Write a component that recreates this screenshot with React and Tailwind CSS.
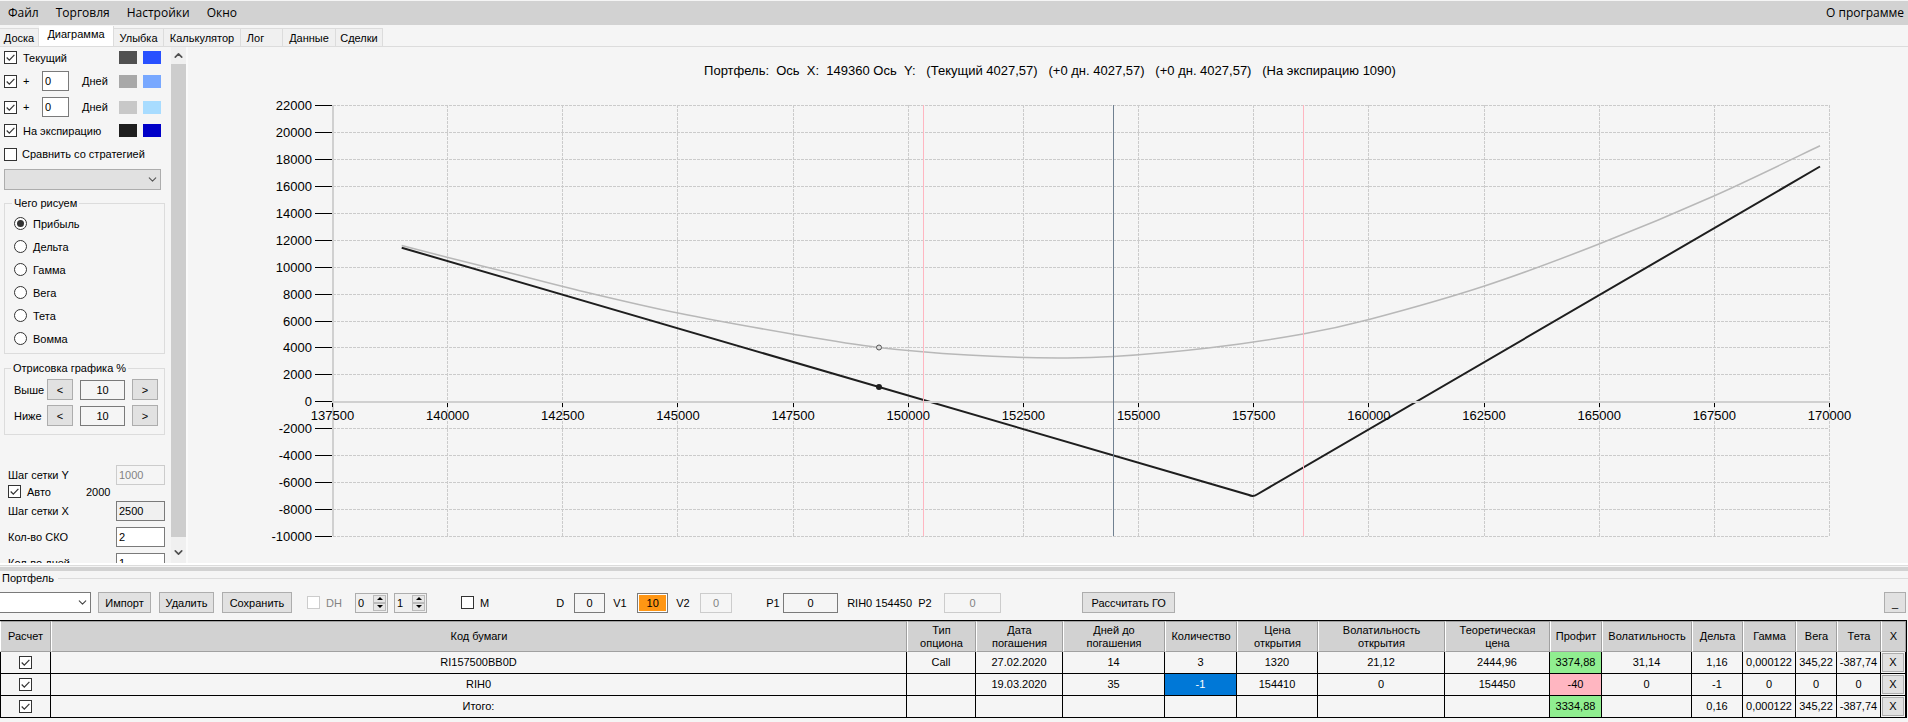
import { useState } from "react";
import { ChevronDown, ChevronUp } from "lucide-react";

const tabs = [
    { name: "Доска", width: "w-[39px]" },
    { name: "Диаграмма", width: "w-[75px]" },
    { name: "Улыбка", width: "w-[50px]" },
    { name: "Калькулятор", width: "w-[77px]" },
    { name: "Лог", width: "w-[42px]" },
    { name: "Данные", width: "w-[53px]" },
    { name: "Сделки", width: "w-[47px]" },
];

const modes = ["Прибыль", "Дельта", "Гамма", "Вега", "Тета", "Вомма"];

const columns = [
    { title: "Расчет", width: "w-[51px]" },
    { title: "Код бумаги", width: "" },
    { title: "Тип опциона", width: "w-[69px]", pad: "px-2" },
    { title: "Дата погашения", width: "w-[87px]", pad: "px-3" },
    { title: "Дней до погашения", width: "w-[102px]", pad: "px-5" },
    { title: "Количество", width: "w-[72px]" },
    { title: "Цена открытия", width: "w-[81px]", pad: "px-3" },
    { title: "Волатильность открытия", width: "w-[127px]" },
    { title: "Теоретическая цена", width: "w-[105px]" },
    { title: "Профит", width: "w-[52px]" },
    { title: "Волатильность", width: "w-[90px]" },
    { title: "Дельта", width: "w-[51px]" },
    { title: "Гамма", width: "w-[53px]" },
    { title: "Вега", width: "w-[41px]" },
    { title: "Тета", width: "w-[44px]" },
    { title: "X", width: "w-[25px]" },
];

const positions = [
    ["RI157500BB0D", "Call", "27.02.2020", "14", "3", "1320", "21,12", "2444,96", "3374,88", "31,14", "1,16", "0,000122", "345,22", "-387,74"],
    ["RIH0", "", "19.03.2020", "35", "-1", "154410", "0", "154450", "-40", "0", "-1", "0", "0", "0"],
    ["Итого:", "", "", "", "", "", "", "", "3334,88", "", "0,16", "0,000122", "345,22", "-387,74"],
];

const cellColor = (row, col) => {
    if (row === 1 && col === 4) return "bg-[#0078d7] text-white";
    if (col === 8) return row === 1 ? "bg-[#ffb6c1]" : "bg-[#90ee90]";
    return "";
};

const Check = ({ id, label, checked = false, disabled = false }) => {
    const [on, setOn] = useState(checked);
    return (
        <span className="relative inline-block size-[13px] shrink-0 align-middle">
            <input
                id={id}
                type="checkbox"
                aria-label={label}
                checked={on}
                disabled={disabled}
                onChange={() => setOn(!on)}
                className="block size-[13px] appearance-none border border-[#333] bg-white disabled:border-[#ccc]"
            />
            {on && (
                <svg className="pointer-events-none absolute inset-0" viewBox="0 0 13 13" fill="none">
                    <path d="M2.7 6.5 5.3 9.1 10.4 3.9" stroke="#333" strokeWidth="1.2" />
                </svg>
            )}
        </span>
    );
};

const Swatches = ({ first, second }) => (
    <span className="ml-auto flex gap-[6px] pr-[10px]">
        <span className={`h-[13px] w-[18px] ${first}`} />
        <span className={`h-[13px] w-[18px] ${second}`} />
    </span>
);

const Button = ({ height = "h-[21px]", className = "", ...props }) => (
    <button
        type="button"
        className={`flex items-center justify-center border border-[#adadad] bg-[#e1e1e1] hover:bg-[#e5f1fb] ${height} ${className}`}
        {...props}
    />
);

const DaysRow = ({ id, first, second }) => (
    <div className="flex h-[26px] items-center pl-1">
        <Check id={id} checked />
        <label htmlFor={id} className="ml-[6px] w-[19px]">+</label>
        <input aria-label="Дней" defaultValue="0" className="h-5 w-[27px] border border-[#7a7a7a] bg-white px-[2px]" />
        <span className="ml-[13px]">Дней</span>
        <Swatches first={first} second={second} />
    </div>
);

const PercentRow = ({ name }) => (
    <div className="flex items-center">
        <span className="w-[33px]">{name}</span>
        <Button className="w-[26px]" aria-label={`${name} меньше`}>&lt;</Button>
        <input aria-label={name} defaultValue="10" className="ml-[7px] h-5 w-[45px] border border-[#7a7a7a] text-center" />
        <Button className="ml-[7px] w-[26px]" aria-label={`${name} больше`}>&gt;</Button>
    </div>
);

const Field = ({ id, label, className = "", ...props }) => (
    <div className="flex items-center justify-between">
        <label htmlFor={id}>{label}</label>
        <input id={id} className={`h-5 w-[49px] border px-[2px] ${className}`} {...props} />
    </div>
);

const Settings = () => {
    const [mode, setMode] = useState("Прибыль");

    return (
        <aside className="flex w-[188px] shrink-0 border-r-2 border-[#fafafa]">
            <div className="w-[171px] overflow-hidden">
                <div className="flex h-[21px] items-center pl-1">
                    <Check id="current" checked />
                    <label htmlFor="current" className="ml-[6px]">Текущий</label>
                    <Swatches first="bg-[#505050]" second="bg-[#2850ff]" />
                </div>
                <DaysRow id="plus1" first="bg-[#a8a8a8]" second="bg-[#78a8ff]" />
                <DaysRow id="plus2" first="bg-[#c8c8c8]" second="bg-[#a8dcff]" />
                <div className="flex h-[21px] items-center pl-1">
                    <Check id="expiration" checked />
                    <label htmlFor="expiration" className="ml-[6px]">На экспирацию</label>
                    <Swatches first="bg-[#1e1e1e]" second="bg-[#0000c8]" />
                </div>
                <div className="flex h-[26px] items-center pl-1">
                    <Check id="compare" />
                    <label htmlFor="compare" className="ml-[5px]">Сравнить со стратегией</label>
                </div>
                <div className="relative ml-1 mt-[2px] w-[157px]">
                    <select aria-label="Стратегия" className="block h-[21px] w-full appearance-none border border-[#adadad] bg-[#e1e1e1]" />
                    <ChevronDown className="pointer-events-none absolute right-[2px] top-1 size-[13px] text-[#555]" strokeWidth={2} />
                </div>

                <fieldset className="ml-1 mt-[6px] w-[161px] border border-[#dcdcdc] pb-[3px] pl-[9px] pt-[2px]">
                    <legend className="-ml-[2px] h-[14px] px-[2px] leading-[14px]">Чего рисуем</legend>
                    {modes.map((item) => (
                        <label key={item} className="flex h-[23px] items-center gap-[6px]">
                            <input
                                type="radio"
                                name="mode"
                                checked={mode === item}
                                onChange={() => setMode(item)}
                                className="grid size-[13px] appearance-none place-items-center rounded-full border border-[#333] bg-white checked:before:size-[7px] checked:before:rounded-full checked:before:bg-[#333] checked:before:content-['']"
                            />
                            {item}
                        </label>
                    ))}
                </fieldset>

                <fieldset className="ml-1 mt-[7px] flex w-[161px] flex-col gap-[5px] border border-[#dcdcdc] pb-2 pl-[9px] pt-1">
                    <legend className="-ml-[3px] h-[14px] px-[2px] leading-[14px]">Отрисовка графика %</legend>
                    <PercentRow name="Выше" />
                    <PercentRow name="Ниже" />
                </fieldset>

                <div className="ml-2 mt-[30px] w-[157px]">
                    <Field id="step-y" label="Шаг сетки Y" defaultValue="1000" disabled className="border-[#ccc] text-[#838383]" />
                    <div className="flex h-[13px] items-center">
                        <Check id="auto" checked />
                        <label htmlFor="auto" className="ml-[6px] w-[59px]">Авто</label>
                        <span>2000</span>
                    </div>
                    <div className="mt-[3px] flex flex-col gap-[6px]">
                        <Field id="step-x" label="Шаг сетки X" defaultValue="2500" className="border-[#7a7a7a] bg-[#f0f0f0]" />
                        <Field id="sko" label="Кол-во СКО" defaultValue="2" className="border-[#7a7a7a] bg-white" />
                        <Field id="days" label="Кол-во дней" defaultValue="1" className="border-[#7a7a7a] bg-white" />
                    </div>
                </div>
            </div>
            <div className="flex w-[15px] flex-col items-center bg-[#f0f0f0]">
                <button type="button" aria-label="Вверх" className="flex h-[17px] items-center">
                    <ChevronUp className="size-[13px] text-[#505050]" strokeWidth={3} />
                </button>
                <div className="w-full flex-1 bg-[#cdcdcd]" />
                <button type="button" aria-label="Вниз" className="flex h-[26px] items-center pt-1">
                    <ChevronDown className="size-[13px] text-[#505050]" strokeWidth={3} />
                </button>
            </div>
        </aside>
    );
};

// plot area inside the 1720x516 drawing
const px = (v) => 144.5 + ((v - 137500) * 1497) / 32500;
const py = (v) => 58.5 + ((22000 - v) * 431) / 32000;

const xTicks = Array.from({ length: 14 }, (_, i) => 137500 + i * 2500);
const yTicks = Array.from({ length: 17 }, (_, i) => 22000 - i * 2000);

const currentPoints = [
    [213.7, 198.6], [260, 210.5], [320, 225.5], [387, 242.5], [490, 266], [604, 287], [690.5, 300.5],
    [780, 308], [870, 311], [925, 309.6], [1020, 301], [1115, 287], [1181, 272.5], [1296.5, 239],
    [1411, 197], [1526.5, 148.7], [1632, 98.8],
];

const smooth = (pts) =>
    pts.slice(0, -1).reduce((d, p1, i) => {
        const p0 = pts[i - 1] || p1;
        const p2 = pts[i + 1];
        const p3 = pts[i + 2] || p2;
        const c1 = [p1[0] + (p2[0] - p0[0]) / 6, p1[1] + (p2[1] - p0[1]) / 6];
        const c2 = [p2[0] - (p3[0] - p1[0]) / 6, p2[1] - (p3[1] - p1[1]) / 6];
        return `${d} C${c1} ${c2} ${p2}`;
    }, `M${pts[0]}`);

const Chart = () => (
    <svg className="h-full min-w-0 flex-1" viewBox="0 0 1720 516" fontSize="13">
        <text x="862" y="28" textAnchor="middle" className="whitespace-pre">
            {"Портфель:  Ось  X:  149360 Ось  Y:   (Текущий 4027,57)   (+0 дн. 4027,57)   (+0 дн. 4027,57)   (На экспирацию 1090)"}
        </text>
        <g stroke="#cbcbcb" strokeDasharray="3 1">
            {yTicks.map((v) => (
                <line key={v} x1="145" x2="1641" y1={Math.floor(py(v)) + 0.5} y2={Math.floor(py(v)) + 0.5} />
            ))}
            {xTicks.map((v) => (
                <line key={v} x1={Math.floor(px(v)) + 0.5} x2={Math.floor(px(v)) + 0.5} y1="58" y2="489" />
            ))}
        </g>
        {yTicks.map((v) => (
            <g key={v}>
                <line x1="127" x2="144" y1={Math.floor(py(v)) + 0.5} y2={Math.floor(py(v)) + 0.5} stroke="#000" />
                <text x="124" y={Math.floor(py(v)) + 5} textAnchor="end">{v}</text>
            </g>
        ))}
        <path d={smooth(currentPoints)} fill="none" stroke="#b8b8b8" strokeWidth="1.5" />
        <path d="M213.7 200.7 1061 448Q1065 450 1069 447.5L1632 119.5" fill="none" stroke="#1e1e1e" strokeWidth="2" />
        <path d="M145 58V489M145 355H1642" stroke="#d0d0d0" strokeWidth="2" />
        <g>
            <line x1="735.5" x2="735.5" y1="58" y2="489" stroke="#ffb6c1" />
            <line x1="925.5" x2="925.5" y1="58" y2="489" stroke="#708090" />
            <line x1="1115.5" x2="1115.5" y1="58" y2="489" stroke="#ffb6c1" />
        </g>
        <circle cx="691" cy="300.5" r="2.5" fill="#ddd" stroke="#555" />
        <circle cx="691" cy="340" r="3" fill="#1e1e1e" />
        {xTicks.map((v) => (
            <g key={v}>
                <line x1={Math.floor(px(v)) + 0.5} x2={Math.floor(px(v)) + 0.5} y1="356" y2="360" stroke="#000" />
                <text x={px(v)} y="373" textAnchor="middle">{v}</text>
            </g>
        ))}
    </svg>
);

const Spinner = ({ label, value }) => (
    <div className="flex h-5 w-[33px] border border-[#adadad] bg-[#f0f0f0]">
        <input aria-label={label} defaultValue={value} className="w-4 pl-[2px]" />
        <div className="flex flex-1 flex-col p-px">
            {["M1 4 4 1 7 4z", "M1 1 4 4 7 1z"].map((d, i) => (
                <button key={d} type="button" aria-label={`${label} ${i ? "−" : "+"}`} className="flex flex-1 items-center justify-center border border-[#bbb] bg-[#e6e6e6]">
                    <svg className="h-[5px] w-2" viewBox="0 0 8 5"><path d={d} /></svg>
                </button>
            ))}
        </div>
    </div>
);

const Param = ({ id, label, value, className = "", inputClass, disabled }) => (
    <div className={`flex items-center justify-between ${className}`}>
        <label htmlFor={id}>{label}</label>
        <input
            id={id}
            defaultValue={value}
            disabled={disabled}
            className={`h-5 border border-[#7a7a7a] text-center disabled:border-[#ccc] disabled:text-[#838383] ${inputClass}`}
        />
    </div>
);

const Toolbar = () => (
    <div className="flex h-[21px] items-center">
        <div className="relative w-[91px]">
            <select aria-label="Портфель" className="block h-[21px] w-full appearance-none border border-l-0 border-[#7a7a7a] bg-white" />
            <ChevronDown className="pointer-events-none absolute right-[2px] top-1 size-[13px] text-[#444]" />
        </div>
        <Button className="ml-[7px] w-[53px]">Импорт</Button>
        <Button className="ml-2 w-[55px]">Удалить</Button>
        <Button className="ml-2 w-[70px]">Сохранить</Button>
        <div className="ml-[15px] flex w-12 items-center gap-[6px] text-[#838383]">
            <Check id="dh" disabled />
            <label htmlFor="dh">DH</label>
        </div>
        <div className="flex gap-[6px]">
            <Spinner label="DH от" value="0" />
            <Spinner label="DH шаг" value="1" />
        </div>
        <div className="ml-[34px] flex items-center gap-[6px]">
            <Check id="m" />
            <label htmlFor="m">M</label>
        </div>
        <Param id="d" label="D" value="0" className="ml-[67px] w-[49px]" inputClass="w-[31px]" />
        <Param id="v1" label="V1" value="10" className="ml-2 w-[55px]" inputClass="w-[31px] bg-[#ff9614] shadow-[inset_0_0_0_1px_#fff]" />
        <Param id="v2" label="V2" value="0" className="ml-2 w-[56px]" inputClass="w-8" disabled />
        <Param id="p1" label="P1" value="0" className="ml-[34px] w-[72px]" inputClass="w-[55px]" />
        <span className="ml-[9px] w-[71px] whitespace-nowrap">RIH0 154450</span>
        <Param id="p2" label="P2" value="0" className="w-[83px]" inputClass="w-[57px]" disabled />
        <Button className="ml-[81px] w-[93px]">Рассчитать ГО</Button>
        <Button className="ml-auto mr-[2px] w-[22px]" aria-label="Свернуть">_</Button>
    </div>
);

const Positions = () => (
    <table className="w-full table-fixed border-separate border-spacing-0 text-center">
        <thead>
            <tr>
                {columns.map((col) => (
                    <th
                        key={col.title}
                        className={`h-[31px] border-y border-l border-r border-y-[#a0a0a0] border-l-white border-r-[#a0a0a0] bg-[#d2d2d2] py-0 font-normal leading-[13px] ${col.width} ${col.pad || "px-0"}`}
                    >
                        {col.title}
                    </th>
                ))}
            </tr>
        </thead>
        <tbody>
            {positions.map((row, r) => (
                <tr key={row[0]}>
                    <td className="h-[22px] border-x border-b border-black p-0 leading-none">
                        <Check label={`Расчет ${row[0]}`} checked />
                    </td>
                    {row.map((value, c) => (
                        <td key={c} className={`h-[22px] border-b border-r border-black p-0 leading-none ${cellColor(r, c)}`}>
                            {value}
                        </td>
                    ))}
                    <td className="h-[22px] border-b border-r border-black p-px leading-none">
                        <Button height="h-[19px]" className="w-full" aria-label={`Удалить ${row[0]}`}>X</Button>
                    </td>
                </tr>
            ))}
        </tbody>
    </table>
);

const App = () => {
    const [tab, setTab] = useState("Диаграмма");

    return (
        <div className="flex h-screen flex-col overflow-hidden bg-[#f5f5f5] font-['Liberation_Sans',sans-serif] text-[11px] leading-[14px] text-black">
            <nav className="mt-px flex h-6 shrink-0 items-center gap-[17px] bg-[#d2d2d2] px-2 font-['Open_Sans',sans-serif] text-[12px]">
                <button type="button">Файл</button>
                <button type="button">Торговля</button>
                <button type="button">Настройки</button>
                <button type="button">Окно</button>
                <button type="button" className="-mr-1 ml-auto">О программе</button>
            </nav>

            <div className="flex h-[22px] shrink-0 items-end border-b border-[#dcdcdc]">
                {tabs.map(({ name, width }) => (
                    <button
                        key={name}
                        type="button"
                        onClick={() => setTab(name)}
                        className={`${width} border-r border-[#dcdcdc] text-center ${name === tab ? "h-5 bg-white pb-1" : "h-[18px] border-t bg-[#f0f0f0]"} ${name === "Лог" ? "pr-3" : ""}`}
                    >
                        {name}
                    </button>
                ))}
            </div>

            <main className="flex min-h-0 flex-1">
                <Settings />
                <Chart />
            </main>

            <div className="h-2 shrink-0 cursor-row-resize border-t-2 border-white">
                <div className="h-[6px] border-b-4 border-t border-b-[#d2d2d2] border-t-[#dcdcdc]" />
            </div>

            <fieldset className="flex h-[151px] min-w-0 shrink-0 flex-col border-t border-[#dcdcdc] pt-[7px]">
                <legend className="h-[14px] pl-[2px] pr-1 leading-[14px]">Портфель</legend>
                <Toolbar />
                <div className="mr-px mt-[7px] flex-1 border-r border-t border-black">
                    <Positions />
                </div>
            </fieldset>
        </div>
    );
};

export default App;
